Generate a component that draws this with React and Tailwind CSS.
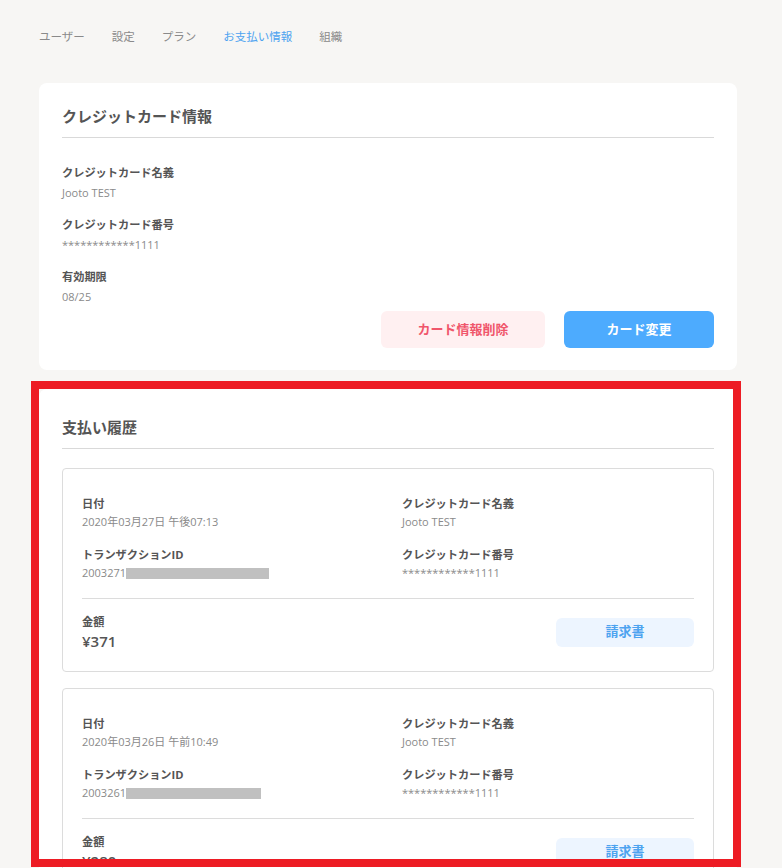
const font = { fontFamily: '"Open Sans", "Noto Sans CJK JP", sans-serif' };

const tabs = ["ユーザー", "設定", "プラン", "お支払い情報", "組織"];

const payments = [
  { date: "2020年03月27日 午後07:13", id: "2003271", bar: "w-[143px]", amount: "¥371" },
  { date: "2020年03月26日 午前10:49", id: "2003261", bar: "w-[135px]", amount: "¥280" },
];

const Field = ({ label, value, gap = "mt-[3px]" }) => (
  <div>
    <div className="text-[11.2px] leading-[18px] font-bold text-[#555]">{label}</div>
    <div className={`${gap} text-[11px] leading-[16px] text-[#8a8a8a]`}>{value}</div>
  </div>
);

const PaymentItem = ({ p }) => (
  <div className="rounded-[4px] border border-[#dcdcdc] px-[19px] pt-[26px] pb-[20px]">
    <div className="grid grid-cols-[320px_1fr] gap-y-[16px]">
      <Field label="日付" value={p.date} gap="mt-[1px]" />
      <Field label="クレジットカード名義" value="Jooto TEST" gap="mt-[1px]" />
      <Field
        label="トランザクションID"
        gap="mt-[1px]"
        value={
          <span className="flex items-center">
            {p.id}
            <span className={`inline-block h-[11px] bg-[#c0c0c0] ${p.bar}`} />
          </span>
        }
      />
      <Field label="クレジットカード番号" value="************1111" gap="mt-[1px]" />
    </div>
    <div className="mt-[17px] border-t border-[#dcdcdc] pt-[14px] flex items-center justify-between">
      <div>
        <div className="text-[11.2px] leading-[18px] font-bold text-[#555]">金額</div>
        <div className="text-[15px] leading-[20px] font-semibold text-[#555]">{p.amount}</div>
      </div>
      <button className="w-[138px] h-[29px] rounded-[6px] bg-[#edf5ff] text-[13px] font-bold text-[#4da3f0]">
        請求書
      </button>
    </div>
  </div>
);

export default function App() {
  return (
    <div className="relative min-h-screen bg-[#f7f6f4] pl-[39px] pr-[45px] pt-[28px] pb-10" style={font}>
      <nav className="flex gap-[27px] text-[11.5px] leading-[18px]">
        {tabs.map((t) => (
          <span key={t} className={t === "お支払い情報" ? "text-[#4da3f0]" : "text-[#8a8a8a]"}>
            {t}
          </span>
        ))}
      </nav>

      <section className="mt-[37px] rounded-[8px] bg-white px-[23px] pt-[21px] pb-[22px]">
        <h2 className="border-b border-[#d9d9d9] pb-[9px] text-[15px] leading-[24px] font-bold text-[#555]">
          クレジットカード情報
        </h2>
        <div className="mt-[26px] flex flex-col gap-[15px]">
          <Field label="クレジットカード名義" value="Jooto TEST" />
          <Field label="クレジットカード番号" value="************1111" />
          <Field label="有効期限" value="08/25" />
        </div>
        <div className="mt-[6px] flex justify-end gap-[19px]">
          <button className="w-[164px] h-[37px] rounded-[6px] bg-[#fff0f1] text-[13px] font-bold text-[#f0566b]">
            カード情報削除
          </button>
          <button className="w-[150px] h-[37px] rounded-[6px] bg-[#4dabfe] text-[13px] font-bold text-white">
            カード変更
          </button>
        </div>
      </section>

      <section className="mt-[19px] rounded-[8px] bg-white px-[23px] pt-[26px] pb-[22px]">
        <h2 className="border-b border-[#d9d9d9] pb-[9px] text-[15px] leading-[24px] font-bold text-[#555]">
          支払い履歴
        </h2>
        <div className="mt-[19px] flex flex-col gap-[16px]">
          {payments.map((p) => (
            <PaymentItem key={p.id} p={p} />
          ))}
        </div>
      </section>

      <div className="pointer-events-none absolute left-[31px] top-[381px] w-[710px] h-[486px] border-[8px] border-[#ed1c24]" />
    </div>
  );
}
